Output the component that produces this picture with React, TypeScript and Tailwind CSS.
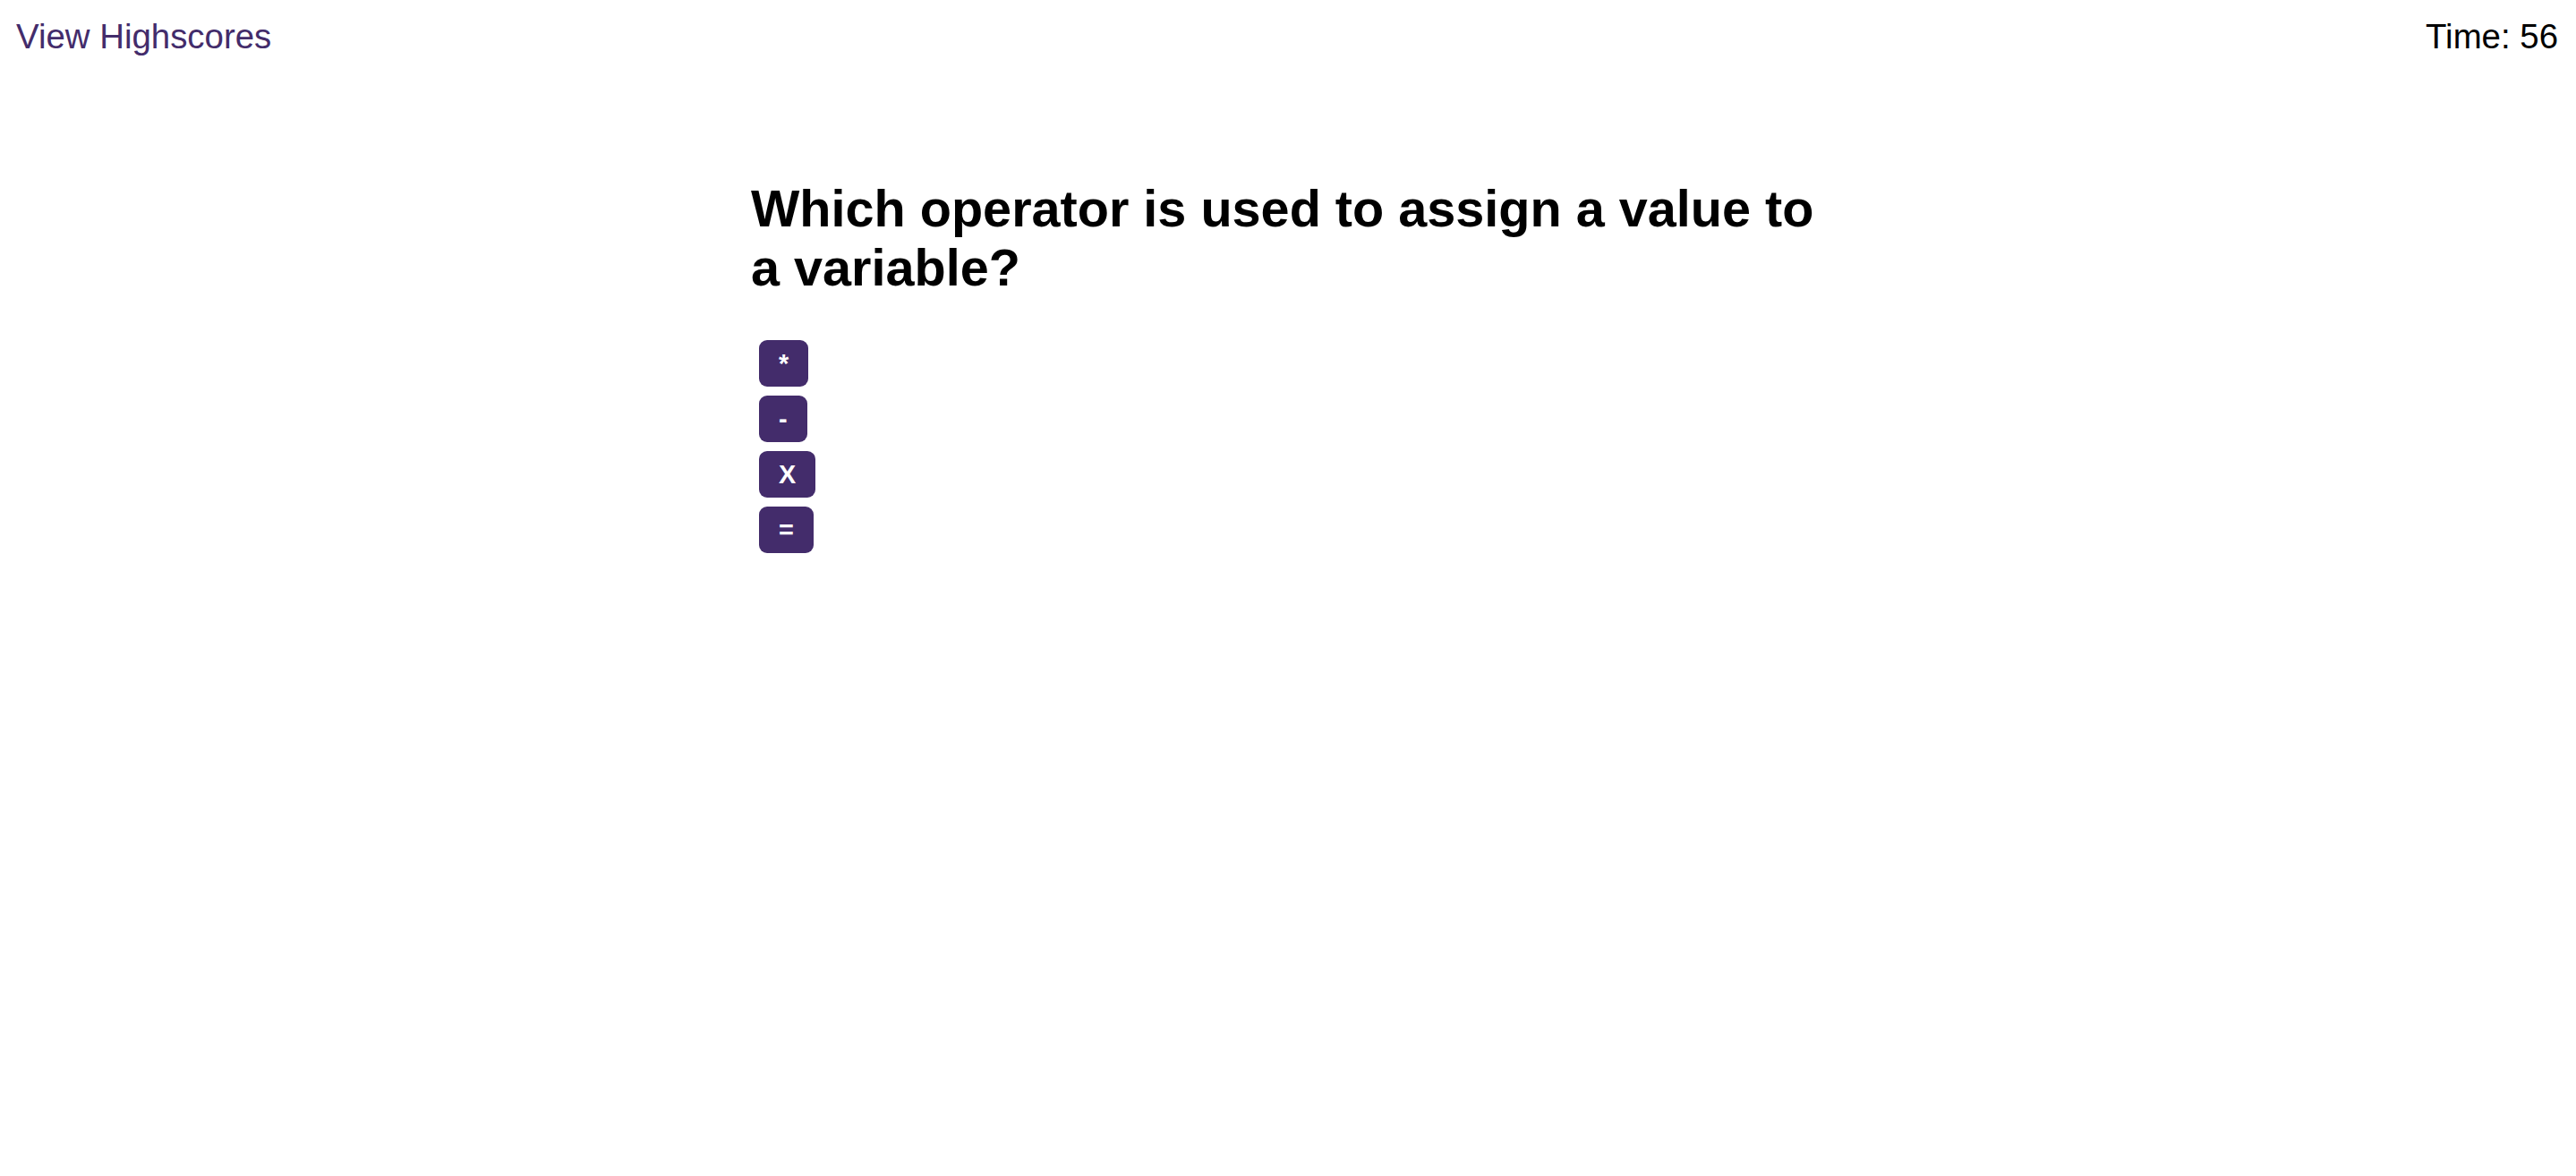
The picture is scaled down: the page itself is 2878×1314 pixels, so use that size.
import React from 'react';

const choices = ['*', '-', 'X', '='];

export default function App() {
  const [time] = React.useState(56);

  return (
    <div className="min-h-screen bg-white font-['Liberation_Sans',Arial,sans-serif] text-black">
      {/* Header */}
      <header className="flex items-start justify-between px-[18px] pt-[19px] text-[38.4px] leading-[1.15]">
        <a href="#" className="text-[#432c6b]">
          View Highscores
        </a>
        <div className="pr-[2px]">Time: {time}</div>
      </header>

      {/* Question */}
      <main className="mx-auto mt-[137px] max-w-[1200px]">
        <h1 className="text-[57.6px] font-bold leading-[1.15]">
          Which operator is used to assign a value to a variable?
        </h1>
        <div className="ml-[9px] mt-[47px] flex flex-col items-start gap-[10px]">
          {choices.map((choice) => (
            <button
              key={choice}
              className="flex h-[52px] items-center rounded-[9px] bg-[#432c6b] px-[22px] pt-[2px] text-[28.8px] font-bold leading-none text-white"
            >
              {choice}
            </button>
          ))}
        </div>
      </main>
    </div>
  );
}
